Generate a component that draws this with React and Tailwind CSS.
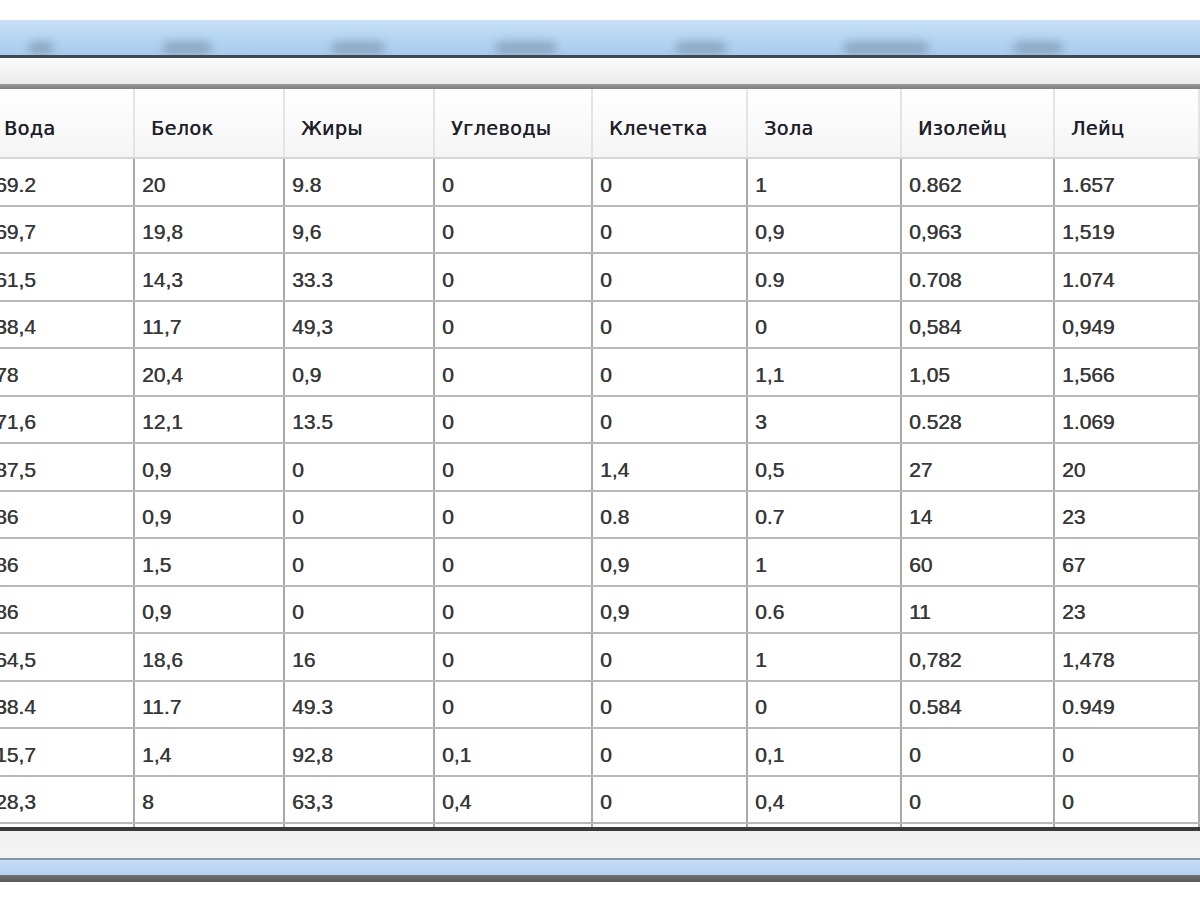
import React from 'react';

const COLS = ['Вода', 'Белок', 'Жиры', 'Углеводы', 'Клечетка', 'Зола', 'Изолейц', 'Лейц'];

const ROWS = [
  ['69.2', '20', '9.8', '0', '0', '1', '0.862', '1.657'],
  ['69,7', '19,8', '9,6', '0', '0', '0,9', '0,963', '1,519'],
  ['61,5', '14,3', '33.3', '0', '0', '0.9', '0.708', '1.074'],
  ['38,4', '11,7', '49,3', '0', '0', '0', '0,584', '0,949'],
  ['78', '20,4', '0,9', '0', '0', '1,1', '1,05', '1,566'],
  ['71,6', '12,1', '13.5', '0', '0', '3', '0.528', '1.069'],
  ['87,5', '0,9', '0', '0', '1,4', '0,5', '27', '20'],
  ['86', '0,9', '0', '0', '0.8', '0.7', '14', '23'],
  ['86', '1,5', '0', '0', '0,9', '1', '60', '67'],
  ['86', '0,9', '0', '0', '0,9', '0.6', '11', '23'],
  ['64,5', '18,6', '16', '0', '0', '1', '0,782', '1,478'],
  ['38.4', '11.7', '49.3', '0', '0', '0', '0.584', '0.949'],
  ['15,7', '1,4', '92,8', '0,1', '0', '0,1', '0', '0'],
  ['28,3', '8', '63,3', '0,4', '0', '0,4', '0', '0'],
];

const GRID = 'grid grid-cols-[147px_150px_150px_158px_155px_154px_153px_1fr]';

// blurred menu captions in the title bar
const SMUDGES = [
  'left-[28px] w-[26px]',
  'left-[162px] w-[50px]',
  'left-[331px] w-[54px]',
  'left-[495px] w-[62px]',
  'left-[675px] w-[52px]',
  'left-[843px] w-[86px]',
  'left-[1013px] w-[50px]',
];

export default function App() {
  return (
    <div className="w-[1200px] h-[900px] bg-white overflow-hidden font-['Liberation_Sans',Arial,sans-serif]">
      {/* top white margin */}
      <div className="h-[20px] bg-white" />

      {/* title bar */}
      <div className="relative h-[35px] bg-gradient-to-b from-[#c8e0f6] via-[#b7d6f3] to-[#a9cbec] overflow-hidden">
        {SMUDGES.map((s, i) => (
          <div key={i} className={`absolute top-[21px] h-[14px] rounded-full bg-[#6a8299] opacity-50 blur-[5px] ${s}`} />
        ))}
      </div>
      <div className="h-[3px] bg-[#3f4852]" />

      {/* toolbar strip */}
      <div className="h-[26px] bg-gradient-to-b from-[#fbfbfb] to-[#ececec]" />
      <div className="h-[5px] bg-gradient-to-b from-[#9a9a9a] to-[#7e7e7e]" />

      {/* grid */}
      <div className="-ml-[12px] w-[1212px]">
        {/* header */}
        <div className={`${GRID} h-[70px] bg-gradient-to-b from-white to-[#f5f5f5] border-b-2 border-[#d6d6d6]`}>
          {COLS.map((c) => (
            <div
              key={c}
              className="flex items-center pl-[16px] pt-[10px] border-r-2 border-[#e4e4e4] font-['DejaVu_Sans',sans-serif] text-[19px] tracking-[0.5px] text-[#20202a] [text-shadow:0.4px_0_0_#20202a]"
            >
              {c}
            </div>
          ))}
        </div>

        {/* rows */}
        {ROWS.map((r, ri) => (
          <div key={ri} className={`${GRID} h-[47.5px] bg-white border-b-2 border-[#b9b9b9]`}>
            {r.map((v, ci) => (
              <div
                key={ci}
                className="flex items-center pl-[7px] pt-[5px] border-r-2 border-[#a9a9a9] text-[21px] text-[#383838] [text-shadow:0.4px_0_0_#383838]"
              >
                {v}
              </div>
            ))}
          </div>
        ))}
        <div className={`${GRID} h-[3px] bg-white`}>
          {COLS.map((c) => (
            <div key={c} className="border-r-2 border-[#a9a9a9]" />
          ))}
        </div>
      </div>

      {/* bottom of window */}
      <div className="h-[4px] bg-[#3a3a3a]" />
      <div className="h-[27px] bg-gradient-to-b from-[#efefef] to-[#f4f4f4]" />
      <div className="h-[2px] bg-[#8797a6]" />
      <div className="h-[15px] bg-gradient-to-b from-[#c6def4] to-[#b3d1ef]" />
      <div className="h-[7px] bg-gradient-to-b from-[#707070] to-[#5a5a5a]" />
      <div className="h-[18px] bg-white" />
    </div>
  );
}
